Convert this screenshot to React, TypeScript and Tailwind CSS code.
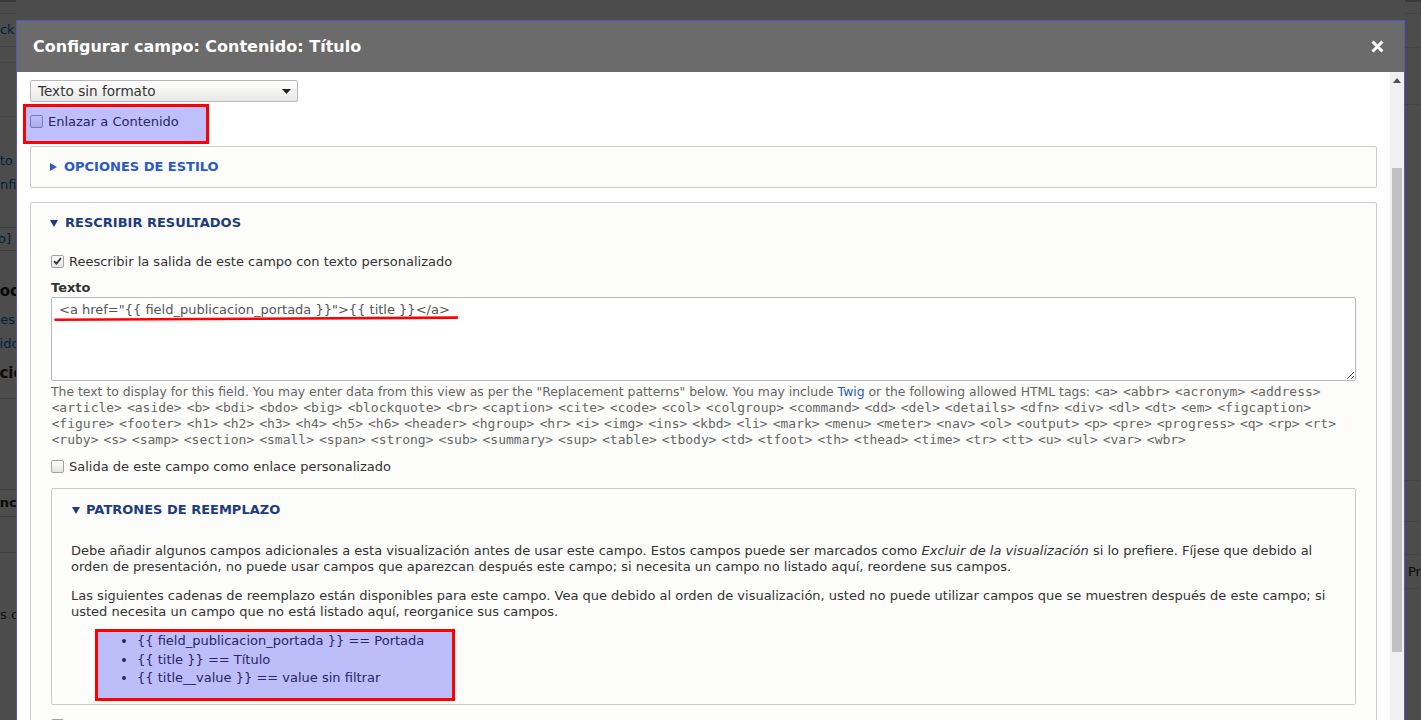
import { Fragment, type ReactNode } from 'react'

const tagLines = [
  ['<a>', '<abbr>', '<acronym>', '<address>'],
  ['<article>', '<aside>', '<b>', '<bdi>', '<bdo>', '<big>', '<blockquote>', '<br>', '<caption>', '<cite>', '<code>', '<col>', '<colgroup>', '<command>', '<dd>', '<del>', '<details>', '<dfn>', '<div>', '<dl>', '<dt>', '<em>', '<figcaption>'],
  ['<figure>', '<footer>', '<h1>', '<h2>', '<h3>', '<h4>', '<h5>', '<h6>', '<header>', '<hgroup>', '<hr>', '<i>', '<img>', '<ins>', '<kbd>', '<li>', '<mark>', '<menu>', '<meter>', '<nav>', '<ol>', '<output>', '<p>', '<pre>', '<progress>', '<q>', '<rp>', '<rt>'],
  ['<ruby>', '<s>', '<samp>', '<section>', '<small>', '<span>', '<strong>', '<sub>', '<summary>', '<sup>', '<table>', '<tbody>', '<td>', '<tfoot>', '<th>', '<thead>', '<time>', '<tr>', '<tt>', '<u>', '<ul>', '<var>', '<wbr>'],
]

const patterns = [
  '{{ field_publicacion_portada }} == Portada',
  '{{ title }} == Título',
  '{{ title__value }} == value sin filtrar',
]

const Tags = ({ tags }: { tags: string[] }) => (
  <>
    {tags.map((t, i) => (
      <Fragment key={i}>
        {i > 0 && ' '}
        <code className="px-[0.5px] font-['DejaVu_Sans_Mono',monospace] text-[13px]">{t}</code>
      </Fragment>
    ))}
  </>
)

const Checkbox = ({ checked }: { checked?: boolean }) => (
  <span className="inline-flex h-[13px] w-[13px] shrink-0 items-center justify-center rounded-[2px] border border-[#a3a3a3] bg-linear-to-b from-white to-[#e3e3e3]">
    {checked && (
      <svg width="9" height="8" viewBox="0 0 9 8">
        <path d="M1 4.2 L3.4 6.6 L8 1.2" fill="none" stroke="#333" strokeWidth="1.8" />
      </svg>
    )}
  </span>
)

const CheckRow = ({ checked, children }: { checked?: boolean; children: ReactNode }) => (
  <label className="flex h-[18px] items-center gap-[5px] text-[13px] leading-[18px] text-[#333]">
    <Checkbox checked={checked} />
    <span className="relative top-[1px]">{children}</span>
  </label>
)

const Highlight = () => (
  <div className="pointer-events-none absolute inset-0 border-[3px] border-[#ff0000] bg-[rgba(0,0,250,0.25)]" />
)

const Closed = () => (
  <svg width="7" height="8" viewBox="0 0 7 8">
    <path d="M0 0 L7 4 L0 8 Z" fill="#2a58c7" />
  </svg>
)

const Open = () => (
  <svg width="8" height="7" viewBox="0 0 8 7">
    <path d="M0 0 L8 0 L4 7 Z" fill="#1d3b80" />
  </svg>
)

const PageBehind = () => (
  <div className="flex h-full text-[13px]">
    <div className="flex w-[16px] flex-col overflow-hidden whitespace-nowrap">
      <div className="h-[2px] shrink-0 bg-[#c4c4c4]" />
      <div className="h-[12px] shrink-0 border-b border-[#e2e2e2]" />
      <div className="flex h-[33px] shrink-0 items-center border-b border-[#dcdcdc] text-[#0074bd]">
        <span className="-ml-[17px]">Back</span>
      </div>
      <div className="h-[16px] shrink-0 border-b border-[#e6e6e6]" />
      <div className="h-[54px] shrink-0 border-b border-[#e6e6e6]" />
      <div className="mt-[32px] flex shrink-0 flex-col leading-[24px] text-[#0074bd]">
        <span className="-ml-[41px]">Formato</span>
        <span className="-ml-[17px]">Configurar</span>
      </div>
      <div className="mt-[30px] flex h-[24px] shrink-0 items-center border-y border-[#d0d0d0] text-[#0074bd]">
        <span className="-ml-[29px]">[Todo]</span>
      </div>
      <div className="mt-[29px] shrink-0 text-[15px] font-bold text-[#222]">
        <span className="-ml-[10px]">Footer</span>
      </div>
      <div className="mt-[5px] flex shrink-0 flex-col leading-[24px] text-[#0074bd]">
        <span className="-ml-[48px]">(opciones)</span>
        <span className="-ml-[47px]">Contenido</span>
      </div>
      <div className="mt-[6px] shrink-0 text-[15px] font-bold text-[#222]">
        <span className="-ml-[58px]">Paginación</span>
      </div>
      <div className="mt-[14px] h-[1px] shrink-0 bg-[#d0d0d0]" />
      <div className="mt-[90px] flex h-[28px] shrink-0 items-center border-y border-[#d0d0d0] font-bold text-[#222]">
        <span className="-ml-[27px]">Avance</span>
      </div>
      <div className="h-[36px] shrink-0 border-b border-[#d0d0d0]" />
      <div className="mt-[52px] shrink-0 text-[#333]">
        <span className="-ml-[32px]">Vistas con</span>
      </div>
    </div>
    <div className="flex-1" />
    <div className="flex w-[16px] flex-col overflow-hidden whitespace-nowrap">
      <div className="h-[2px] shrink-0 bg-[#c4c4c4]" />
      <div className="h-[12px] shrink-0 border-b border-[#e2e2e2]" />
      <div className="h-[34px] shrink-0 border-b border-[#dcdcdc]" />
      <div className="h-[57px] shrink-0 border-b border-[#dcdcdc]" />
      <div className="mt-[375px] h-[42px] shrink-0 border-y border-[#dcdcdc]" />
      <div className="mt-[32px] flex h-[35px] shrink-0 items-center border-y border-[#dcdcdc] pl-[3px] text-[#222]">Previsualizar</div>
    </div>
  </div>
)

const Scrollbar = () => (
  <div className="flex w-[14px] shrink-0 flex-col bg-[#f0f0f0]">
    <div className="flex h-[17px] items-center justify-center">
      <svg width="8" height="5" viewBox="0 0 8 5">
        <path d="M0 5 L4 0 L8 5 Z" fill="#505050" />
      </svg>
    </div>
    <div className="mx-[2px] mt-[79px] h-[484px] bg-[#c1c1c1]" />
  </div>
)

export default function App() {
  return (
    <div className="relative h-[720px] w-full overflow-hidden bg-white font-['DejaVu_Sans',sans-serif]">
      <PageBehind />
      <div className="absolute inset-0 bg-black/70" />

      <div className="absolute left-[16px] top-[20px] flex h-[720px] w-[1389px] flex-col border border-[#5b52c9] bg-white">
        <div className="flex h-[51px] shrink-0 items-center justify-between bg-[#6b6b6b] pl-[16px] pr-[20px]">
          <h2 className="text-[16px] font-bold text-white">Configurar campo: Contenido: Título</h2>
          <svg width="13" height="13" viewBox="0 0 13 13">
            <path d="M1.5 1.5 L11.5 11.5 M11.5 1.5 L1.5 11.5" stroke="white" strokeWidth="3" />
          </svg>
        </div>

        <div className="flex min-h-0 flex-1">
          <div className="flex-1 overflow-hidden px-[13px] pt-[8px]">
            <div className="flex h-[22px] w-[268px] items-center justify-between rounded-[2px] border border-[#b8b8b8] bg-linear-to-b from-[#fefefe] to-[#e8e8e6] pl-[7px] pr-[6px] text-[13.6px] text-[#333]">
              <span>Texto sin formato</span>
              <svg width="9" height="5" viewBox="0 0 9 5">
                <path d="M0 0 L9 0 L4.5 5 Z" fill="#222" />
              </svg>
            </div>

            <div className="relative mt-[10px]">
              <CheckRow>Enlazar a Contenido</CheckRow>
              <div className="absolute -top-[8px] left-[-7px] h-[40px] w-[186px]">
                <Highlight />
              </div>
            </div>

            <div className="mt-[16px] rounded-[2px] border border-[#cbcbcb] bg-[#fcfcfa] pb-[11px] pl-[19px] pt-[11px]">
              <div className="flex items-center gap-[7px] text-[13px] font-bold leading-[18px] text-[#2a58c7]">
                <Closed />
                <span>OPCIONES DE ESTILO</span>
              </div>
            </div>

            <div className="mt-[14px] rounded-[2px] border border-[#cbcbcb] bg-[#fcfcfa] pt-[11px]">
              <div className="flex items-center gap-[7px] pl-[19px] text-[13px] font-bold leading-[18px] text-[#1d3b80]">
                <Open />
                <span>RESCRIBIR RESULTADOS</span>
              </div>

              <div className="px-[20px] pt-[20px]">
                <CheckRow checked>Reescribir la salida de este campo con texto personalizado</CheckRow>

                <div className="mt-[9px] text-[13px] font-bold leading-[18px] text-[#333]">Texto</div>
                <div className="relative">
                  <textarea
                    readOnly
                    defaultValue={'<a href="{{ field_publicacion_portada }}">{{ title }}</a>'}
                    className="block h-[84px] w-full resize-y rounded-[2px] border border-[#b8b8b8] bg-white px-[7px] py-[2px] font-['DejaVu_Sans',sans-serif] text-[13px] leading-[20px] text-[#555] outline-none"
                  />
                  <svg className="pointer-events-none absolute left-[3px] top-[19px]" width="405" height="6" viewBox="0 0 405 6">
                    <path d="M1.5 3.8 Q 120 3 403 1.6" fill="none" stroke="#ff0000" strokeWidth="2.6" strokeLinecap="round" />
                  </svg>
                </div>

                <div className="mt-[3px] whitespace-nowrap text-[12.4px] leading-[16px] text-[#666]">
                  <div>
                    The text to display for this field. You may enter data from this view as per the "Replacement patterns" below. You may include{' '}
                    <span className="text-[#2a58c7]">Twig</span> or the following allowed HTML tags: <Tags tags={tagLines[0]} />
                  </div>
                  <div><Tags tags={tagLines[1]} /></div>
                  <div><Tags tags={tagLines[2]} /></div>
                  <div><Tags tags={tagLines[3]} /></div>
                </div>

                <div className="mt-[9px]">
                  <CheckRow>Salida de este campo como enlace personalizado</CheckRow>
                </div>

                <div className="mt-[13px] rounded-[2px] border border-[#cbcbcb] bg-[#fcfcfa] pb-[3px] pt-[12px]">
                  <div className="flex items-center gap-[6px] pl-[20px] text-[13px] font-bold leading-[18px] text-[#1d3b80]">
                    <Open />
                    <span>PATRONES DE REEMPLAZO</span>
                  </div>
                  <div className="whitespace-nowrap pl-[19px] pt-[24px] text-[13px] leading-[16px] text-[#333]">
                    <p>
                      Debe añadir algunos campos adicionales a esta visualización antes de usar este campo. Estos campos puede ser marcados como{' '}
                      <em>Excluir de la visualización</em> si lo prefiere. Fíjese que debido al
                      <br />
                      orden de presentación, no puede usar campos que aparezcan después este campo; si necesita un campo no listado aquí, reordene sus campos.
                    </p>
                    <p className="mt-[13px]">
                      Las siguientes cadenas de reemplazo están disponibles para este campo. Vea que debido al orden de visualización, usted no puede utilizar campos que se muestren después de este campo; si
                      <br />
                      usted necesita un campo que no está listado aquí, reorganice sus campos.
                    </p>
                    <div className="relative ml-[24px] mt-[9px] w-[360px]">
                      <ul className="list-disc pb-[13px] pl-[42px] pt-[3px] leading-[18.5px]">
                        {patterns.map((p) => (
                          <li key={p}>{p}</li>
                        ))}
                      </ul>
                      <Highlight />
                    </div>
                  </div>
                </div>

                <div className="mt-[12px]">
                  <CheckRow>Usar reemplazo absoluto</CheckRow>
                </div>
              </div>
            </div>
          </div>
          <Scrollbar />
        </div>
      </div>
    </div>
  )
}
